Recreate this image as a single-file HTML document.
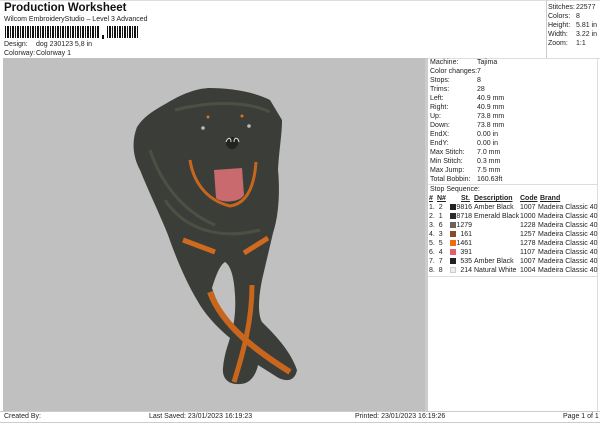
<!DOCTYPE html>
<html><head><meta charset="utf-8"><style>
*{margin:0;padding:0;box-sizing:border-box}
body{width:600px;height:424px;background:#fff;font-family:"Liberation Sans",sans-serif;font-size:7px;color:#222;position:relative;overflow:hidden}
.a{position:absolute;white-space:nowrap;line-height:9px}
.u{text-decoration:underline;font-weight:bold}
</style></head><body>
<div style="position:absolute;left:0;top:0;width:600px;height:1px;background:#ddd"></div>
<div class="a" style="left:4px;top:2px;font-size:11.5px;font-weight:bold;line-height:13px;color:#111">Production Worksheet</div>
<div class="a" style="left:4px;top:15px">Wilcom EmbroideryStudio – Level 3 Advanced</div>
<svg style="position:absolute;left:5px;top:26px" width="135" height="14">
<g fill="#111">
<rect x="0" y="0" width="1" height="12"/><rect x="2" y="0" width="2" height="12"/><rect x="5" y="0" width="1" height="12"/><rect x="7" y="0" width="2" height="12"/><rect x="10" y="0" width="1" height="12"/><rect x="12" y="0" width="2" height="12"/><rect x="15" y="0" width="1" height="12"/><rect x="17" y="0" width="2" height="12"/><rect x="20" y="0" width="1" height="12"/><rect x="22" y="0" width="2" height="12"/><rect x="25" y="0" width="1" height="12"/><rect x="27" y="0" width="2" height="12"/><rect x="30" y="0" width="1" height="12"/><rect x="32" y="0" width="2" height="12"/><rect x="35" y="0" width="1" height="12"/><rect x="37" y="0" width="2" height="12"/><rect x="40" y="0" width="1" height="12"/><rect x="42" y="0" width="2" height="12"/><rect x="45" y="0" width="1" height="12"/><rect x="47" y="0" width="2" height="12"/><rect x="50" y="0" width="1" height="12"/><rect x="52" y="0" width="2" height="12"/><rect x="55" y="0" width="1" height="12"/><rect x="57" y="0" width="2" height="12"/><rect x="60" y="0" width="1" height="12"/><rect x="62" y="0" width="2" height="12"/><rect x="65" y="0" width="1" height="12"/><rect x="67" y="0" width="2" height="12"/><rect x="70" y="0" width="1" height="12"/><rect x="72" y="0" width="2" height="12"/><rect x="75" y="0" width="1" height="12"/><rect x="77" y="0" width="2" height="12"/><rect x="80" y="0" width="1" height="12"/><rect x="82" y="0" width="2" height="12"/><rect x="85" y="0" width="1" height="12"/><rect x="87" y="0" width="2" height="12"/><rect x="90" y="0" width="1" height="12"/><rect x="92" y="0" width="2" height="12"/>
<rect x="97" y="9" width="2" height="4"/>
<rect x="102" y="0" width="1" height="12"/><rect x="104" y="0" width="2" height="12"/><rect x="107" y="0" width="1" height="12"/><rect x="109" y="0" width="2" height="12"/><rect x="112" y="0" width="1" height="12"/><rect x="114" y="0" width="2" height="12"/><rect x="117" y="0" width="1" height="12"/><rect x="119" y="0" width="2" height="12"/><rect x="122" y="0" width="1" height="12"/><rect x="124" y="0" width="2" height="12"/><rect x="127" y="0" width="1" height="12"/><rect x="129" y="0" width="2" height="12"/><rect x="132" y="0" width="1" height="12"/>
</g></svg>
<div class="a" style="left:4px;top:40px">Design:</div><div class="a" style="left:36px;top:40px">dog 230123 5,8 in</div>
<div class="a" style="left:4px;top:49px">Colorway:</div><div class="a" style="left:36px;top:49px">Colorway 1</div>

<div style="position:absolute;left:546px;top:0;width:1px;height:58px;background:#ccc"></div>
<div class="a" style="left:548px;top:3px">Stitches:</div><div class="a" style="left:576px;top:3px">22577</div>
<div class="a" style="left:548px;top:12px">Colors:</div><div class="a" style="left:576px;top:12px">8</div>
<div class="a" style="left:548px;top:21px">Height:</div><div class="a" style="left:576px;top:21px">5.81 in</div>
<div class="a" style="left:548px;top:30px">Width:</div><div class="a" style="left:576px;top:30px">3.22 in</div>
<div class="a" style="left:548px;top:39px">Zoom:</div><div class="a" style="left:576px;top:39px">1:1</div>

<div style="position:absolute;left:3px;top:58px;width:422px;height:353px;background:#c0c0c0"></div>
<div style="position:absolute;left:425px;top:58px;width:3px;height:353px;background:#ccc"></div>
<div style="position:absolute;left:428px;top:58px;width:172px;height:1px;background:#ddd"></div>
<div style="position:absolute;left:597px;top:58px;width:1px;height:353px;background:#ddd"></div>

<svg style="position:absolute;left:0;top:0" width="425" height="411">
<path d="M167,103 C185,92 200,88 210,88 C230,88 255,92 270,100 L282,120 C282,135 279,150 278,170 C280,190 279,215 273,233 L262,280 C258,300 258,315 262,322 C275,335 290,350 297,370 C295,382 285,382 277,377 L258,365 C256,375 250,384 240,384 C228,385 222,378 223,368 C224,355 228,345 230,338 C220,330 205,315 197,300 C185,280 175,255 168,235 C160,215 148,190 140,170 C132,155 132,140 137,127 C145,115 155,110 167,103 Z" fill="#3b3e38"/>
<path d="M225,262 C230,265 234,275 235,295 C236,310 234,325 232,330 C224,318 216,300 212,288 C216,275 220,265 225,262 Z" fill="#c0c0c0"/>
<path d="M150,150 C160,180 180,210 215,225 M175,110 C205,102 245,100 270,112 M165,200 C185,230 220,240 260,230" stroke="#5f6050" stroke-width="3" fill="none" opacity=".5"/>
<path d="M190,160 C193,180 205,200 230,206 C245,204 254,190 256,162" stroke="#c8661e" stroke-width="3" fill="none"/>
<path d="M214,170 L242,168 L244,195 C240,203 220,203 216,198 Z" fill="#c86a6e"/>
<circle cx="232" cy="143" r="6" fill="#232322"/>
<path d="M226,142 C228,137 231,137 231,142 M234,142 C234,137 238,137 239,142" stroke="#ddd" stroke-width="1" fill="none"/>
<circle cx="203" cy="128" r="1.8" fill="#bbb"/><circle cx="249" cy="126" r="1.8" fill="#bbb"/>
<circle cx="208" cy="117" r="1.5" fill="#d8731c"/><circle cx="242" cy="116" r="1.5" fill="#d8731c"/>
<path d="M183,240 L215,252 M244,253 L268,238" stroke="#d06a1e" stroke-width="5" fill="none"/>
<path d="M210,292 C222,325 255,350 290,372" stroke="#c8661e" stroke-width="6" fill="none"/>
<path d="M252,285 C252,320 244,350 234,382" stroke="#c8661e" stroke-width="5" fill="none"/>
</svg>

<div class="a" style="left:430px;top:58px">Machine:</div><div class="a" style="left:477px;top:58px">Tajima</div>
<div class="a" style="left:430px;top:67px">Color changes:</div><div class="a" style="left:477px;top:67px">7</div>
<div class="a" style="left:430px;top:76px">Stops:</div><div class="a" style="left:477px;top:76px">8</div>
<div class="a" style="left:430px;top:85px">Trims:</div><div class="a" style="left:477px;top:85px">28</div>
<div class="a" style="left:430px;top:94px">Left:</div><div class="a" style="left:477px;top:94px">40.9 mm</div>
<div class="a" style="left:430px;top:103px">Right:</div><div class="a" style="left:477px;top:103px">40.9 mm</div>
<div class="a" style="left:430px;top:112px">Up:</div><div class="a" style="left:477px;top:112px">73.8 mm</div>
<div class="a" style="left:430px;top:121px">Down:</div><div class="a" style="left:477px;top:121px">73.8 mm</div>
<div class="a" style="left:430px;top:130px">EndX:</div><div class="a" style="left:477px;top:130px">0.00 in</div>
<div class="a" style="left:430px;top:139px">EndY:</div><div class="a" style="left:477px;top:139px">0.00 in</div>
<div class="a" style="left:430px;top:148px">Max Stitch:</div><div class="a" style="left:477px;top:148px">7.0 mm</div>
<div class="a" style="left:430px;top:157px">Min Stitch:</div><div class="a" style="left:477px;top:157px">0.3 mm</div>
<div class="a" style="left:430px;top:166px">Max Jump:</div><div class="a" style="left:477px;top:166px">7.5 mm</div>
<div class="a" style="left:430px;top:175px">Total Bobbin:</div><div class="a" style="left:477px;top:175px">160.63ft</div>
<div style="position:absolute;left:428px;top:184px;width:169px;height:1px;background:#ddd"></div>
<div class="a" style="left:430px;top:185px">Stop Sequence:</div>
<div class="a u" style="left:429px;top:194px">#</div><div class="a u" style="left:437px;top:194px">N#</div><div class="a u" style="left:461px;top:194px">St.</div><div class="a u" style="left:474px;top:194px">Description</div><div class="a u" style="left:520px;top:194px">Code</div><div class="a u" style="left:540px;top:194px">Brand</div>
<div class="a" style="left:429px;top:203px;line-height:9px">1.&nbsp; 2<br>2.&nbsp; 1<br>3.&nbsp; 6<br>4.&nbsp; 3<br>5.&nbsp; 5<br>6.&nbsp; 4<br>7.&nbsp; 7<br>8.&nbsp; 8</div>
<div style="position:absolute;left:450px;top:204px;width:6px;height:6px;background:#222"></div>
<div style="position:absolute;left:450px;top:213px;width:6px;height:6px;background:#2a2a2a"></div>
<div style="position:absolute;left:450px;top:222px;width:6px;height:6px;background:#6e625a"></div>
<div style="position:absolute;left:450px;top:231px;width:6px;height:6px;background:#8a4a25"></div>
<div style="position:absolute;left:450px;top:240px;width:6px;height:6px;background:#f06a10"></div>
<div style="position:absolute;left:450px;top:249px;width:6px;height:6px;background:#e06070"></div>
<div style="position:absolute;left:450px;top:258px;width:6px;height:6px;background:#222"></div>
<div style="position:absolute;left:450px;top:267px;width:6px;height:6px;background:#eee;border:1px solid #ccc"></div>
<div class="a" style="left:456px;top:203px;width:16px;text-align:right">9816<br>8718<br>1279<br>161<br>1461<br>391<br>535<br>214</div>
<div class="a" style="left:474px;top:203px">Amber Black<br>Emerald Black<br><br><br><br><br>Amber Black<br>Natural White</div>
<div class="a" style="left:520px;top:203px">1007<br>1000<br>1228<br>1257<br>1278<br>1107<br>1007<br>1004</div>
<div class="a" style="left:538px;top:203px">Madeira Classic 40<br>Madeira Classic 40<br>Madeira Classic 40<br>Madeira Classic 40<br>Madeira Classic 40<br>Madeira Classic 40<br>Madeira Classic 40<br>Madeira Classic 40</div>
<div style="position:absolute;left:428px;top:276px;width:169px;height:1px;background:#ddd"></div>

<div style="position:absolute;left:0;top:411px;width:600px;height:1px;background:#ccc"></div>
<div style="position:absolute;left:0;top:422px;width:600px;height:1px;background:#ccc"></div>
<div class="a" style="left:4px;top:412px">Created By:</div>
<div class="a" style="left:149px;top:412px">Last Saved: 23/01/2023 16:19:23</div>
<div class="a" style="left:355px;top:412px">Printed: 23/01/2023 16:19:26</div>
<div class="a" style="left:563px;top:412px">Page 1 of 1</div>
</body></html>
